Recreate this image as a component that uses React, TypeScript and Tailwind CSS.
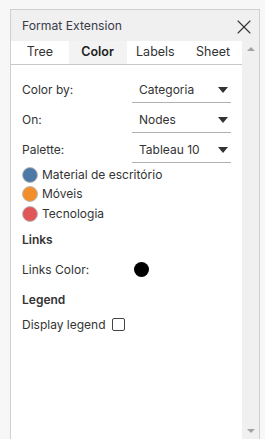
import { X } from 'lucide-react';

const rows = [
  { label: 'Color by:', value: 'Categoria' },
  { label: 'On:', value: 'Nodes' },
  { label: 'Palette:', value: 'Tableau 10' },
];

const legend = [
  { name: 'Material de escritório', color: 'bg-[#4e79a7]' },
  { name: 'Móveis', color: 'bg-[#f28e2b]' },
  { name: 'Tecnologia', color: 'bg-[#e15759]' },
];

const tabs = ['Tree', 'Color', 'Labels', 'Sheet'];

function Caret() {
  return <span className="w-0 h-0 border-l-[5px] border-r-[5px] border-t-[6px] border-l-transparent border-r-transparent border-t-[#333]" />;
}

export default function App() {
  return (
    <div className="h-[439px] bg-[#f7f7f7] pl-[10px] pr-[5px] pt-[9px] overflow-hidden text-[#333] text-[12px]" style={{ fontFamily: 'Inter, "Noto Sans", sans-serif' }}>
      <div className="h-full border-l border-r border-t border-[#cfcfcf] flex flex-col">
        {/* Title bar */}
        <div className="h-[31px] bg-[#f0f0f0] flex items-center justify-between pl-[11px] pr-[3px] pt-[2px] shrink-0">
          <span className="text-[12.2px] text-[#3a3a4a]">Format Extension</span>
          <X className="w-[24px] h-[24px] text-[#333]" strokeWidth={1.1} />
        </div>

        <div className="flex flex-1 min-h-0">
          {/* Main panel */}
          <div className="flex-1 bg-white flex flex-col">
            <div className="grid grid-cols-4 h-[24px] border-b border-[#c8c8c8] text-[12.5px]">
              {tabs.map((tab) => (
                <div
                  key={tab}
                  className={
                    tab === 'Color'
                      ? 'flex items-center justify-center bg-[#f3f3f3] font-semibold text-[#222]'
                      : 'flex items-center justify-center text-[#333]'
                  }
                >
                  {tab}
                </div>
              ))}
            </div>

            <div className="pl-[11px] pr-[11px] pt-[13px]">
              {rows.map((row) => (
                <div key={row.label} className="flex h-[30px]">
                  <span className="flex-1 pt-[3px]">{row.label}</span>
                  <div className="w-[99px] h-[25px] border-b border-[#b0b0b0] flex items-center justify-between pl-[7px] pr-[3px]">
                    <span>{row.value}</span>
                    <Caret />
                  </div>
                </div>
              ))}

              <div className="flex flex-col -mt-[3px]">
                {legend.map((item) => (
                  <div key={item.name} className="flex items-center gap-[4px] h-[19.5px]">
                    <span className={`w-[16px] h-[16px] rounded-full border border-[#bbb] ${item.color}`} />
                    <span>{item.name}</span>
                  </div>
                ))}
              </div>

              <div className="font-semibold mt-[8px] h-[16px] flex items-center">Links</div>

              <div className="flex items-center mt-[14px] h-[16px]">
                <span className="w-[112px]">Links Color:</span>
                <span className="w-[15px] h-[15px] rounded-full bg-black" />
              </div>

              <div className="font-semibold mt-[14px] h-[16px] flex items-center">Legend</div>

              <div className="flex items-center mt-[9px] h-[16px] gap-[6px]">
                <span>Display legend</span>
                <span className="w-[13px] h-[13px] rounded-[2px] border border-[#444]" />
              </div>
            </div>
          </div>

          {/* Scrollbar */}
          <div className="w-[17px] bg-[#f0f0f0] flex flex-col items-center justify-between py-[6px]">
            <span className="w-0 h-0 border-l-[4px] border-r-[4px] border-b-[4px] border-l-transparent border-r-transparent border-b-[#a3a3a3]" />
            <span className="w-0 h-0 border-l-[4px] border-r-[4px] border-t-[4px] border-l-transparent border-r-transparent border-t-[#a3a3a3]" />
          </div>
        </div>
      </div>
    </div>
  );
}
